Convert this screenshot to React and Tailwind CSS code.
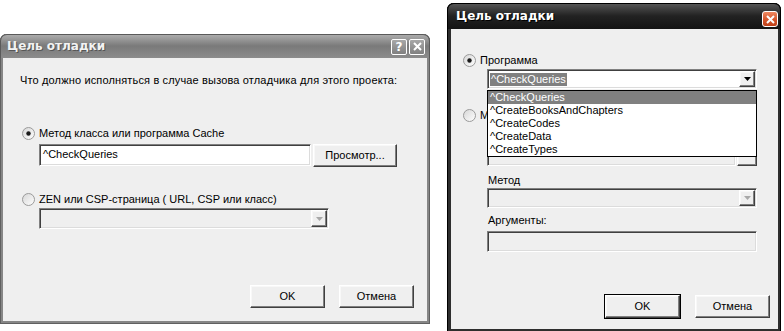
import React from "react";

// sunken 3D edge used by text fields and combos
const sunken =
  "border border-t-[#808080] border-l-[#808080] border-r-white border-b-white shadow-[inset_1px_1px_0_#404040,inset_-1px_-1px_0_#dcdcdc]";
// raised 3D edge used by push buttons
const raised =
  "border border-t-white border-l-white border-r-[#404040] border-b-[#404040] shadow-[inset_-1px_-1px_0_#808080,inset_1px_1px_0_#f8f8f8] bg-[#efefef]";

function Radio({ checked }) {
  return (
    <svg width="13" height="13" viewBox="0 0 13 13" className="shrink-0">
      <defs>
        <linearGradient id="rg" x1="0" y1="0" x2="1" y2="1">
          <stop offset="0" stopColor="#d6d6d6" />
          <stop offset="1" stopColor="#ffffff" />
        </linearGradient>
      </defs>
      <circle cx="6.5" cy="6.5" r="6" fill="url(#rg)" stroke="#9a9a9a" />
      {checked && <circle cx="6.5" cy="6.5" r="2.2" fill="#1a1a1a" />}
    </svg>
  );
}

function DropBtn({ disabled }) {
  return (
    <div className={`ml-auto w-[16px] h-full flex items-center justify-center ${raised}`}>
      <svg width="7" height="4" viewBox="0 0 7 4">
        <path d="M0 0h7L3.5 4z" fill={disabled ? "#a8a8a8" : "#000"} />
      </svg>
    </div>
  );
}

function PushButton({ children, isDefault, w = "w-[75px]" }) {
  return (
    <button
      className={`${w} h-[23px] ${raised} text-[11px] leading-none text-black ${
        isDefault ? "outline outline-1 outline-black" : ""
      }`}
    >
      {children}
    </button>
  );
}

function CloseGlyph() {
  return (
    <svg width="9" height="9" viewBox="0 0 9 9">
      <path d="M1 1l7 7M8 1L1 8" stroke="#fff" strokeWidth="2" />
    </svg>
  );
}

function LeftDialog() {
  return (
    <div className="mt-[34px] w-[430px] h-[290px] flex flex-col rounded-t-[7px] bg-[#868686] px-[3px] pb-[3px] shadow-[inset_1px_0_0_#606060,inset_-1px_0_0_#606060,inset_0_-1px_0_#606060]">
      <div className="h-[24px] -mx-[3px] rounded-t-[7px] bg-linear-to-b from-[#b0b0b0] via-[#7a7a7a] to-[#8c8c8c] flex items-center pl-[7px] pr-[5px] shadow-[inset_0_1px_0_#5a5a5a,inset_1px_0_0_#5a5a5a,inset_-1px_0_0_#5a5a5a]">
        <span className="font-['DejaVu_Sans',sans-serif] font-bold text-[12px] text-[#f2f2f2] [text-shadow:1px_1px_0_#555]">
          Цель отладки
        </span>
        <div className="ml-auto flex gap-[2px] mt-[1px]">
          <div className="w-[16px] h-[16px] rounded-[2px] border border-white bg-linear-to-b from-[#a8a8a8] to-[#808080] flex items-center justify-center font-['DejaVu_Sans',sans-serif] font-bold text-[12px] leading-none text-white">
            ?
          </div>
          <div className="w-[16px] h-[16px] rounded-[2px] border border-white bg-linear-to-b from-[#a8a8a8] to-[#808080] flex items-center justify-center">
            <CloseGlyph />
          </div>
        </div>
      </div>

      <div className="flex-1 bg-[#efefef] flex flex-col pl-[17px] pr-[13px]">
        <p className="mt-[16px] leading-[13px] tracking-[0.15px]">
          Что должно исполняться в случае вызова отладчика для этого проекта:
        </p>

        <label className="mt-[40px] ml-[2px] h-[13px] flex items-center gap-[4px]">
          <Radio checked />
          Метод класса или программа Cache
        </label>
        <div className="mt-[4px] ml-[19px] flex gap-[2px]">
          <div className={`w-[272px] h-[22px] bg-white ${sunken} px-[3px] leading-[19px]`}>
            ^CheckQueries
          </div>
          <PushButton w="w-[84px]">Просмотр...</PushButton>
        </div>

        <label className="mt-[26px] ml-[2px] h-[13px] flex items-center gap-[4px]">
          <Radio />
          ZEN или CSP-страница ( URL, CSP или класс)
        </label>
        <div className={`mt-[2px] ml-[19px] w-[290px] h-[21px] bg-[#efefef] ${sunken} flex p-[1px]`}>
          <DropBtn disabled />
        </div>

        <div className="mt-auto mb-[13px] flex justify-end gap-[14px]">
          <PushButton>OK</PushButton>
          <PushButton>Отмена</PushButton>
        </div>
      </div>
    </div>
  );
}

const items = ["^CheckQueries", "^CreateBooksAndChapters", "^CreateCodes", "^CreateData", "^CreateTypes"];

function RightDialog() {
  return (
    <div className="mt-[3px] ml-[17px] w-[334px] h-[328px] flex flex-col rounded-t-[7px] bg-[#2e2e2e] pl-[4px] pr-[3px] pb-[2px] shadow-[inset_1px_0_0_#000,inset_-1px_0_0_#000]">
      <div className="h-[26px] -ml-[4px] -mr-[3px] rounded-t-[7px] bg-linear-to-b from-[#5a5a5a] via-[#222222] to-[#141414] flex items-center pl-[9px] pr-[3px] shadow-[inset_0_1px_0_#000,inset_1px_0_0_#000,inset_-1px_0_0_#000]">
        <span className="font-['DejaVu_Sans',sans-serif] font-bold text-[12px] text-white [text-shadow:1px_1px_0_#000]">
          Цель отладки
        </span>
        <div className="ml-auto mt-[6px] w-[16px] h-[16px] rounded-[3px] border border-white bg-linear-to-b from-[#f08860] via-[#d85a30] to-[#c04018] flex items-center justify-center">
          <CloseGlyph />
        </div>
      </div>

      <div className="flex-1 bg-[#efefef] flex flex-col pl-[12px] pr-[8px]">
        <label className="mt-[25px] h-[13px] flex items-center gap-[4px]">
          <Radio checked />
          Программа
        </label>
        <div className="relative mt-[2px] ml-[24px] w-[270px] h-[20px]">
          <div className={`w-full h-full bg-white ${sunken} flex items-center p-[1px]`}>
            <span className="ml-[1px] bg-[#808080] text-white leading-[13px] px-[1px]">^CheckQueries</span>
            <DropBtn />
          </div>
          <ul className="absolute z-10 left-0 top-[21px] w-[270px] bg-white border border-black">
            {items.map((it, i) => (
              <li
                key={it}
                className={`h-[13px] leading-[13px] px-[2px] ${i === 0 ? "bg-[#808080] text-white" : ""}`}
              >
                {it}
              </li>
            ))}
          </ul>
        </div>

        {/* second radio: its label sits partly behind the open list */}
        <label className="mt-[20px] h-[13px] flex items-center gap-[4px]">
          <Radio />
          М
        </label>
        <div className="mt-[24px] ml-[24px] flex">
          <div className={`w-[249px] h-[20px] bg-[#efefef] ${sunken}`} />
          <div className={`ml-[1px] w-[20px] h-[20px] ${raised} text-[#a0a0a0] leading-[12px] text-center`}>...</div>
        </div>

        <div className="mt-[8px] ml-[25px] h-[13px] leading-[13px]">Метод</div>
        <div className={`mt-[1px] ml-[24px] w-[270px] h-[20px] bg-[#efefef] ${sunken} flex p-[1px]`}>
          <DropBtn disabled />
        </div>

        <div className="mt-[6px] ml-[25px] h-[13px] leading-[13px]">Аргументы:</div>
        <div className={`mt-[4px] ml-[24px] w-[270px] h-[21px] bg-[#efefef] ${sunken}`} />

        <div className="mt-auto mb-[11px] flex justify-end gap-[15px]">
          <PushButton isDefault>OK</PushButton>
          <PushButton>Отмена</PushButton>
        </div>
      </div>
    </div>
  );
}

export default function App() {
  return (
    <div className="w-[784px] h-[331px] overflow-hidden bg-white flex items-start font-['Liberation_Sans',Arial,sans-serif] text-[11px] text-black">
      <LeftDialog />
      <RightDialog />
    </div>
  );
}
